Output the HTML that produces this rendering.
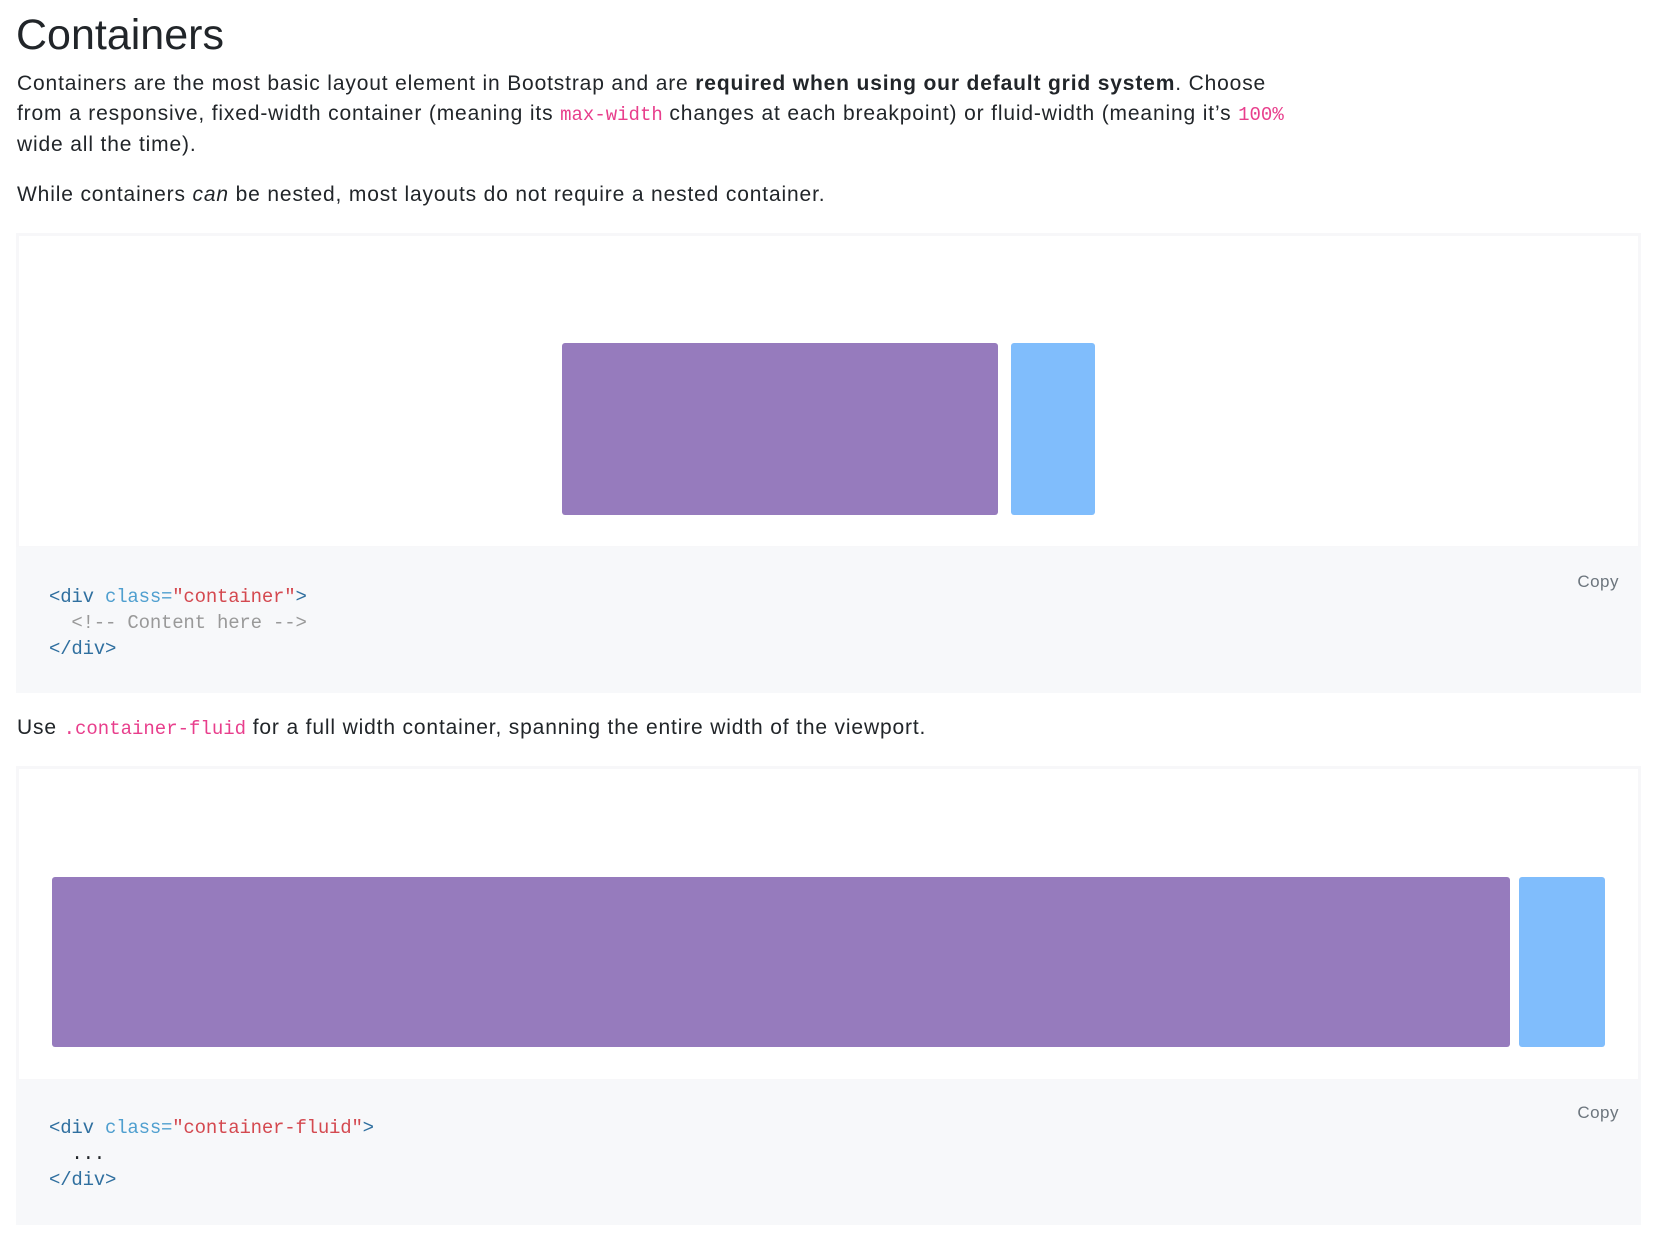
<!DOCTYPE html>
<html><head><style>
body{margin:0;background:#fff;width:1662px;height:1244px;position:relative;overflow:hidden;font-family:"Liberation Sans",sans-serif;color:#212529}
h1{position:absolute;left:16px;top:8px;margin:0;font-weight:400;font-size:43px;line-height:54px}
p{position:absolute;left:17px;margin:0;font-size:21px;line-height:30px;letter-spacing:0.85px;white-space:nowrap}
code{font-family:"Liberation Mono",monospace;color:#e83e8c;font-size:19px;letter-spacing:0}
.ex{position:absolute;left:16px;width:1625px;border:3px solid #f7f7f9;background:#fff;box-sizing:border-box}
.hl{position:absolute;left:16px;width:1625px;background:#f7f8fa}
.cd{position:absolute;left:49px;font-family:"Liberation Mono",monospace;font-size:19px;line-height:26px;white-space:pre;color:#2f6f9f;letter-spacing:-0.2px}
.at{color:#4f9fcf}.s{color:#d44950}.c{color:#999}.k{color:#212529}
.copy{position:absolute;right:22px;font-size:17px;color:#6c757d;letter-spacing:0.5px}
.b{position:absolute;border-radius:3px}
</style></head><body>
<h1>Containers</h1>
<p style="top:69px">Containers are the most basic layout element in Bootstrap and are <b>required when using our default grid system</b>. Choose<br>from a responsive, fixed-width container (meaning its <code>max-width</code> changes at each breakpoint) or fluid-width (meaning it’s <code>100%</code><br>wide all the time).</p>
<p style="top:180px">While containers <i>can</i> be nested, most layouts do not require a nested container.</p>
<div class="ex" style="top:233px;height:316px"></div>
<div class="b" style="left:562px;top:343px;width:436px;height:172px;background:#967bbd"></div>
<div class="b" style="left:1011px;top:343px;width:84px;height:172px;background:#80bdfc"></div>
<div class="hl" style="top:547px;height:146px"><div class="copy" style="top:25px">Copy</div></div>
<div class="cd" style="top:584px">&lt;div <span class="at">class=</span><span class="s">"container"</span>&gt;
  <span class="c">&lt;!-- Content here --&gt;</span>
&lt;/div&gt;</div>
<p style="top:713px">Use <code>.container-fluid</code> for a full width container, spanning the entire width of the viewport.</p>
<div class="ex" style="top:766px;height:316px"></div>
<div class="b" style="left:52px;top:877px;width:1458px;height:170px;background:#967bbd"></div>
<div class="b" style="left:1519px;top:877px;width:86px;height:170px;background:#80bdfc"></div>
<div class="hl" style="top:1080px;height:145px"><div class="copy" style="top:23px">Copy</div></div>
<div class="cd" style="top:1115px">&lt;div <span class="at">class=</span><span class="s">"container-fluid"</span>&gt;
  <span class="k">...</span>
&lt;/div&gt;</div>
</body></html>
